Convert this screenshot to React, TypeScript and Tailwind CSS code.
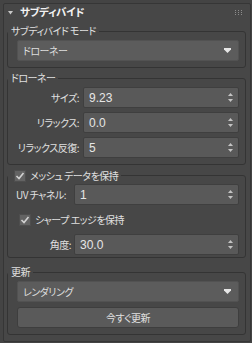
import React from "react";

const jp = "[font-family:'Noto_Sans_CJK_JP','Noto_Sans',sans-serif] [font-feature-settings:'palt'] text-[10px] tracking-[-0.5px]";
const num = "[font-family:'Liberation_Sans',Arial,sans-serif]";

function Arrow() {
  return (
    <svg width="7" height="5" viewBox="0 0 7 5" className="shrink-0">
      <polygon points="0,0 7,0 7,1.5 3.5,5 0,1.5" fill="#e6e6e6" />
    </svg>
  );
}

function Spinner() {
  return (
    <svg width="5" height="9" viewBox="0 0 5 9" className="shrink-0">
      <polygon points="0,3 2.5,0 5,3" fill="#c4c4c4" />
      <polygon points="0,6 5,6 2.5,9" fill="#c4c4c4" />
    </svg>
  );
}

function Dropdown({ text }: { text: string }) {
  return (
    <div className="h-[21px] w-full rounded-[2px] bg-[#5c5c5c] border border-[#525252] flex items-center justify-between pl-[5px] pr-[7px]">
      <span className={`${jp} leading-none text-[#dedede]`}>{text}</span>
      <Arrow />
    </div>
  );
}

function NumInput({ value, w }: { value: string; w: string }) {
  return (
    <div className={`h-[21px] ${w} shrink-0 rounded-[2px] bg-[#595959] border border-[#3f3f3f] flex items-center justify-between pl-[5px] pr-[5px]`}>
      <span className={`${num} text-[12px] leading-none text-[#e6e6e6]`}>{value}</span>
      <Spinner />
    </div>
  );
}

function Check() {
  return (
    <div className="w-[12px] h-[12px] shrink-0 bg-[#636363] border border-[#4e4e4e] flex items-center justify-center">
      <svg width="10" height="10" viewBox="0 0 10 10">
        <path d="M1.5 5 L4 7.5 L8.5 2" stroke="#d2d2d2" strokeWidth="1.6" fill="none" />
      </svg>
    </div>
  );
}

const fs = "ml-[3px] w-[239px] border border-[#343434] rounded-[3px] p-0";

export default function App() {
  return (
    <div className="w-[252px] h-[343px] bg-[#444444] pt-[3px] pl-[3px] overflow-hidden">
      <div className="w-[248px] h-[339px] border border-[#363636] rounded-[2px] bg-[#474747] flex flex-col">
        {/* header */}
        <div className="h-[17px] flex items-center pl-[4px] pr-[4px]">
          <svg width="5" height="4" viewBox="0 0 5 4" className="shrink-0">
            <polygon points="0,0 5,0 2.5,3.5" fill="#c8c8c8" />
          </svg>
          <span className="[font-family:'Noto_Sans_CJK_JP','Noto_Sans',sans-serif] [font-feature-settings:'palt'] ml-[7px] text-[10.5px] tracking-[-0.3px] font-bold leading-none text-[#f2f2f2]">サブディバイド</span>
          <svg width="7" height="5" viewBox="0 0 7 5" className="ml-auto mr-[4px] shrink-0">
            {[0, 3, 6].map((x) =>
              [0, 2, 4].map((y) => <rect key={`${x}-${y}`} x={x} y={y} width="1" height="1" fill="#8c8c8c" />)
            )}
          </svg>
        </div>

        {/* group 1 */}
        <fieldset className={`mt-[4px] ${fs}`}>
          <legend className={`${jp} ml-[0px] px-[3px] leading-[12px] text-[#e0e0e0]`}>サブディバイド モード</legend>
          <div className="pl-[9px] pr-[6px] pt-[3px] pb-[6px]">
            <Dropdown text="ドローネー" />
          </div>
        </fieldset>

        {/* group 2 */}
        <fieldset className={`mt-[4px] ${fs}`}>
          <legend className={`${jp} px-[3px] leading-[12px] text-[#e0e0e0]`}>ドローネー</legend>
          <div className="pl-[8px] pr-[6px] pt-[3px] pb-[6px] flex flex-col gap-[4px]">
            {[
              ["サイズ:", "9.23"],
              ["リラックス:", "0.0"],
              ["リラックス反復:", "5"],
            ].map(([l, v]) => (
              <div key={l} className="flex items-center">
                <span className={`${jp} flex-1 min-w-0 text-right pr-[4px] leading-none text-[#e0e0e0] whitespace-nowrap`}>{l}</span>
                <NumInput value={v} w="w-[156px]" />
              </div>
            ))}
          </div>
        </fieldset>

        {/* group 3 */}
        <fieldset className={`mt-[4px] ${fs}`}>
          <legend className="pl-[6px] pr-[3px] h-[13px] flex items-center gap-[4px]">
            <Check />
            <span className={`${jp} leading-none text-[#e0e0e0]`}>メッシュ データを保持</span>
          </legend>
          <div className="pl-[8px] pr-[6px] pt-[2px] pb-[2px] flex flex-col gap-[4px]">
            <div className="flex items-center">
              <span className={`${jp} flex-1 min-w-0 pr-[3px] leading-none text-[#e0e0e0] whitespace-nowrap`}>UV チャネル:</span>
              <NumInput value="1" w="w-[165px]" />
            </div>
            <div className="h-[21px] flex items-center gap-[4px] pl-[3px]">
              <Check />
              <span className={`${jp} leading-none text-[#e0e0e0]`}>シャープ エッジを保持</span>
            </div>
            <div className="flex items-center">
              <span className={`${jp} flex-1 min-w-0 text-right pr-[3px] leading-none text-[#e0e0e0] whitespace-nowrap`}>角度:</span>
              <NumInput value="30.0" w="w-[165px]" />
            </div>
          </div>
        </fieldset>

        {/* group 4 */}
        <fieldset className={`mt-[8px] ${fs}`}>
          <legend className={`${jp} px-[3px] leading-[12px] text-[#e0e0e0]`}>更新</legend>
          <div className="pl-[9px] pr-[6px] pt-[3px] pb-[6px] flex flex-col gap-[5px]">
            <Dropdown text="レンダリング" />
            <div className={`${jp} h-[21px] w-full rounded-[3px] bg-[#5a5a5a] border border-[#3e3e3e] flex items-center justify-center leading-none text-[#e0e0e0]`}>
              今すぐ更新
            </div>
          </div>
        </fieldset>
      </div>
    </div>
  );
}
